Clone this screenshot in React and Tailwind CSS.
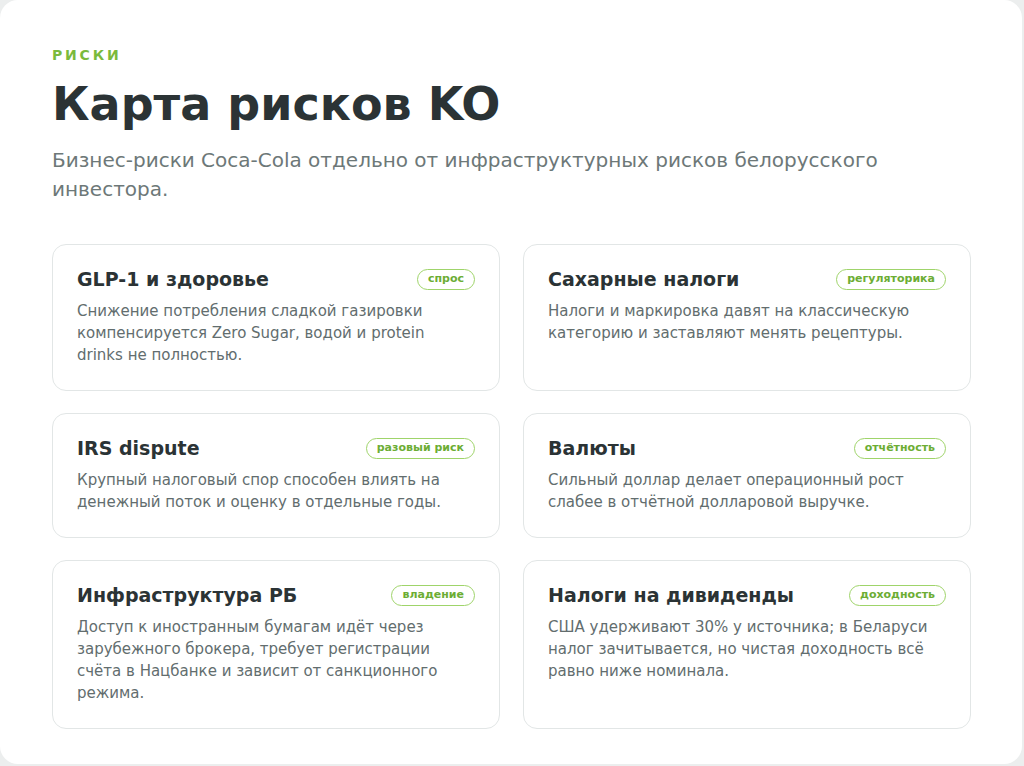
import React from 'react';

const cards = [
  { title: 'GLP-1 и здоровье', tag: 'спрос', text: 'Снижение потребления сладкой газировки компенсируется Zero Sugar, водой и protein drinks не полностью.' },
  { title: 'Сахарные налоги', tag: 'регуляторика', text: 'Налоги и маркировка давят на классическую категорию и заставляют менять рецептуры.' },
  { title: 'IRS dispute', tag: 'разовый риск', text: 'Крупный налоговый спор способен влиять на денежный поток и оценку в отдельные годы.' },
  { title: 'Валюты', tag: 'отчётность', text: 'Сильный доллар делает операционный рост слабее в отчётной долларовой выручке.' },
  { title: 'Инфраструктура РБ', tag: 'владение', text: 'Доступ к иностранным бумагам идёт через зарубежного брокера, требует регистрации счёта в Нацбанке и зависит от санкционного режима.' },
  { title: 'Налоги на дивиденды', tag: 'доходность', text: 'США удерживают 30% у источника; в Беларуси налог зачитывается, но чистая доходность всё равно ниже номинала.' },
];

const App = () => {
  return (
    <div className="w-[1024px] h-[766px] bg-[#eceeee] font-[DejaVu_Sans,Verdana,sans-serif]">
      <div className="w-[1022px] h-[764px] bg-white rounded-[18px] px-[52px] pt-[46px]">
        <div className="text-[14px] font-bold tracking-[0.2em] text-[#7aba3c] leading-[18px]">РИСКИ</div>
        <h1 className="mt-[12px] text-[46px] font-bold text-[#2b3335] leading-[56px]">Карта рисков KO</h1>
        <p className="mt-[14px] text-[20px] leading-[29px] text-[#6d7878] w-[880px]">
          Бизнес-риски Coca-Cola отдельно от инфраструктурных рисков белорусского инвестора.
        </p>
        <div className="mt-[40px] grid grid-cols-2 gap-x-[23px] gap-y-[22px] w-[919px]">
          {cards.map((c) => (
            <div key={c.title} className="border border-[#e2e6e6] rounded-[14px] px-[24px] pt-[21px] pb-[24px]">
              <div className="flex items-center justify-between">
                <div className="text-[19px] font-bold text-[#2b3335] leading-[26px]">{c.title}</div>
                <div className="border-[1.5px] border-[#9fd46a] rounded-full px-[10px] h-[21px] flex items-center text-[11px] font-bold text-[#6cad34]">{c.tag}</div>
              </div>
              <p className="mt-[8px] text-[15px] leading-[22px] text-[#626d6e]">{c.text}</p>
            </div>
          ))}
        </div>
      </div>
    </div>
  );
};

export default App;
